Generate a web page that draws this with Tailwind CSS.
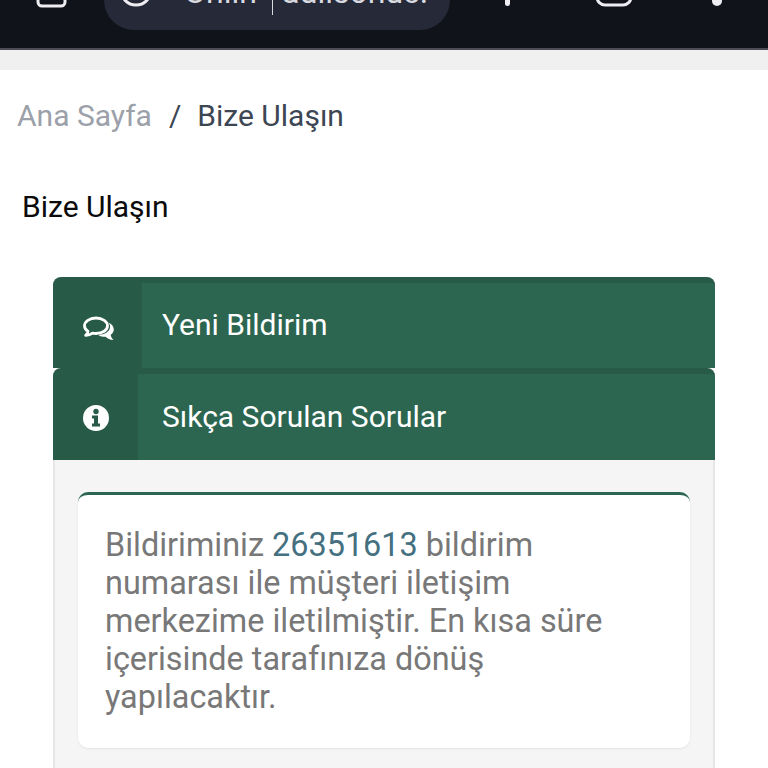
<!DOCTYPE html>
<html>
<head>
    <meta charset="utf-8">
    <script src="https://cdn.jsdelivr.net/npm/@tailwindcss/browser@4"></script>
</head>
<body class="w-[768px] h-[768px] overflow-hidden bg-white font-['Roboto',sans-serif]">

    <!-- Browser bar, cut off at the top of the screenshot -->
    <div class="relative h-[50px] bg-[#11131b] border-b-2 border-[#4d4d57] overflow-hidden">
        <svg class="absolute left-[35px] top-[-12px]" width="32" height="20" viewBox="0 0 32 20" fill="none" stroke="#eeeef2" stroke-width="3"><rect x="3" y="-8" width="27" height="26" rx="4"/></svg>
        <div class="absolute left-[104px] top-[-30px] w-[346px] h-[60px] rounded-[30px] bg-[#262937]"></div>
        <svg class="absolute left-[116px] top-[-14px]" width="40" height="22" viewBox="0 0 40 22" fill="none" stroke="#eeeef2" stroke-width="3"><circle cx="20" cy="4" r="15"/></svg>
        <div class="absolute left-[184px] top-[-24px] text-[32px] leading-[32px] text-[#d9dae0]">Onlin</div>
        <div class="absolute left-[272px] top-0 w-px h-[15px] bg-[#d9dae0]"></div>
        <div class="absolute left-[282px] top-[-24px] text-[32px] leading-[32px] text-[#d9dae0] whitespace-nowrap">adlisonuc.</div>
        <div class="absolute left-[505px] top-0 w-[5px] h-[6px] rounded-b-full bg-[#eeeef2]"></div>
        <svg class="absolute left-[594px] top-[-12px]" width="40" height="20" viewBox="0 0 40 20" fill="none" stroke="#eeeef2" stroke-width="3"><rect x="3" y="-10" width="34" height="27" rx="8"/></svg>
        <div class="absolute left-[712px] top-0 w-[10px] h-[6px] rounded-b-full bg-[#eeeef2]"></div>
    </div>
    <div class="h-[20px] bg-[#f0f0f0]"></div>

    <!-- Breadcrumb -->
    <nav class="flex items-center h-[52px] pl-[17px] text-[30px] mt-[19px]">
        <span class="text-[#9ba0a9]">Ana Sayfa</span>
        <span class="ml-[17px] mr-[16px] text-[#3d4653]">/</span>
        <span class="text-[#3d4653]">Bize Ulaşın</span>
    </nav>

    <h1 class="mt-[48px] pl-[22px] text-[30px] leading-[36px] text-[#0b0b0b]">Bize Ulaşın</h1>

    <!-- Tabs and message -->
    <div class="mt-[52px] mx-[53px] w-[662px]">
        <div class="flex h-[91px] rounded-t-[8px] overflow-hidden bg-[#2d6650] border-t-[6px] border-[#285b47] text-white">
            <div class="flex items-center justify-center w-[89px] pt-[6px] bg-[#285b47]">
                <svg width="32" height="26" viewBox="0 0 32 26" fill="none" stroke="#fff" stroke-width="2.8" stroke-linejoin="round">
                    <path d="M14 2c6.600 0 11.500 3.500 11.500 7.800S20.600 17.500 14 17.500c-1.200 0-2.300-.1-3.400-.3-1.800 1.300-4.300 2.200-7 2.100 1.400-1 2.300-2.400 2.400-4C3.700 14 2.500 12 2.500 9.800 2.500 5.500 7.400 2 14 2z"/>
                    <path fill="#fff" stroke="none" d="M26.500 6.500c3 1.500 5.300 3.800 5.300 7 0 2.100-1.200 3.900-3.100 5.200.2 1.800 1.200 3.500 2.800 5.300-3.500-.1-5.800-1.200-8-3.200-2.800 0-5.300-.5-7-1.900 6.300-.2 11.600-3.200 11.600-8.300 0-1.400-.6-2.600-1.600-4.100z"/>
                </svg>
            </div>
            <div class="flex items-center pl-[20px] pb-[2px] text-[30px]">Yeni Bildirim</div>
        </div>
        <div class="flex h-[92px] rounded-t-[8px] overflow-hidden bg-[#2d6650] border-t-[6px] border-[#285b47] text-white">
            <div class="flex items-center justify-center w-[85px] pt-[2px] bg-[#285b47]">
                <svg width="26" height="26" viewBox="0 0 26 26">
                    <circle cx="13" cy="13" r="13" fill="#fff"/>
                    <circle cx="13" cy="6.500" r="2.700" fill="#285b47"/>
                    <path fill="#285b47" d="M9 10.500h6v8h2v3H9v-3h2v-5H9z"/>
                </svg>
            </div>
            <div class="flex items-center pl-[24px] pb-[2px] text-[30px]">Sıkça Sorulan Sorular</div>
        </div>
        <div class="h-[340px] pt-[32px] px-[23px] bg-[#f5f5f5] border-x-2 border-[#e6e6e6]">
            <div class="h-[256px] pt-[31px] pl-[27px] pr-[40px] bg-white rounded-[10px] border-t-[3px] border-[#2d6650] shadow-[0_1px_2px_rgba(0,0,0,0.08)] text-[32.4px] leading-[38px] text-[#787878]">
                Bildiriminiz <span class="text-[#44707f]">26351613</span> bildirim numarası ile müşteri iletişim merkezime iletilmiştir. En kısa süre içerisinde tarafınıza dönüş yapılacaktır.
            </div>
        </div>
    </div>
</body>
</html>
